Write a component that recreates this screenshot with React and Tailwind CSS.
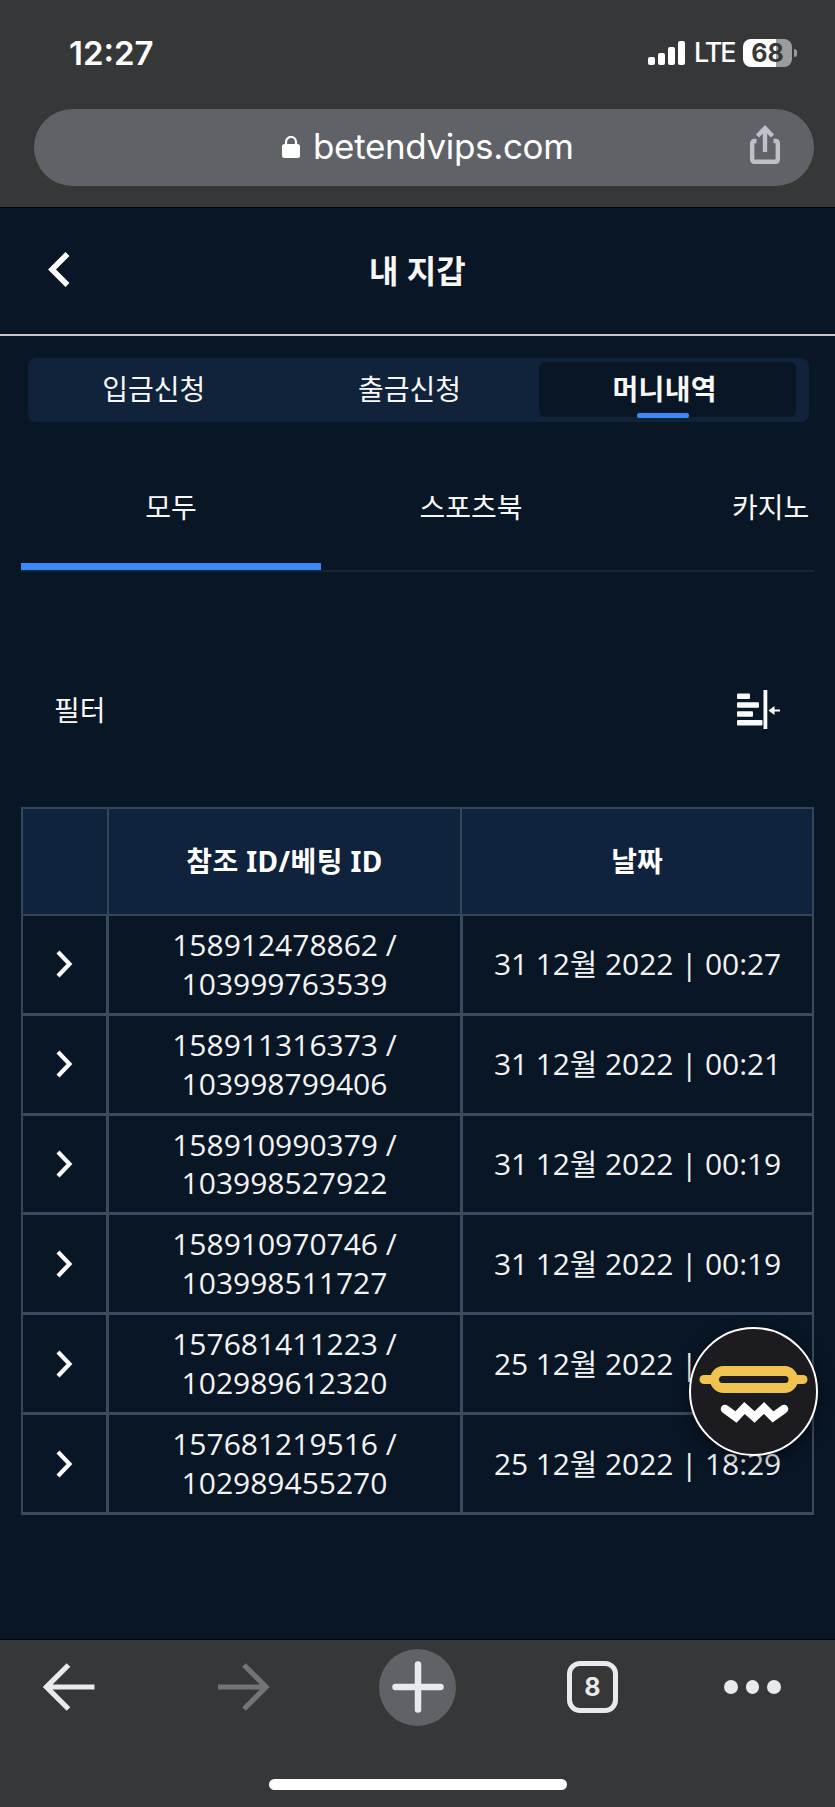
import React from 'react';

const tabs = ['입금신청', '출금신청', '머니내역'];

const rows = [
  { refId: '158912478862', betId: '103999763539', date: '31 12월 2022 | 00:27' },
  { refId: '158911316373', betId: '103998799406', date: '31 12월 2022 | 00:21' },
  { refId: '158910990379', betId: '103998527922', date: '31 12월 2022 | 00:19' },
  { refId: '158910970746', betId: '103998511727', date: '31 12월 2022 | 00:19' },
  { refId: '157681411223', betId: '102989612320', date: '25 12월 2022 | 18:33' },
  { refId: '157681219516', betId: '102989455270', date: '25 12월 2022 | 18:29' },
];

function StatusBar() {
  return (
    <div className="flex h-[109px] items-start justify-between pt-[34px] pr-[38px] pl-[69px] text-white">
      <div className="text-[33px] leading-[38px] font-semibold">12:27</div>
      <div className="flex h-[38px] items-center">
        <svg width="37" height="24" viewBox="0 0 37 24" fill="currentColor">
          <rect x="0" y="16" width="7" height="8" rx="2" />
          <rect x="10" y="12" width="7" height="12" rx="2" />
          <rect x="20" y="6" width="7" height="18" rx="2" />
          <rect x="30" y="0" width="7" height="24" rx="2" />
        </svg>
        <span className="ml-[9px] w-[40px] text-[27px] leading-[38px] font-medium tracking-[-2px] whitespace-nowrap">LTE</span>
        <div className="ml-[9px] flex h-[28px] w-[49px] items-center justify-center rounded-[8px] bg-linear-to-r from-white from-67% to-[#9b9c9d] to-67% text-[25px] leading-none font-bold text-[#363738]">
          68
        </div>
        <div className="ml-[2px] h-[8px] w-[3px] rounded-r-full bg-[#9b9c9d]" />
      </div>
    </div>
  );
}

function AddressBar() {
  return (
    <div className="mr-[21px] ml-[34px] flex h-[77px] items-center rounded-full bg-[#5f6267] pr-[34px] pl-[248px]">
      <svg className="mb-[2px]" width="18" height="22" viewBox="0 0 18 22" fill="none">
        <rect x="0" y="8" width="18" height="14" rx="2.5" fill="#fff" />
        <path d="M4 9V6a5 5 0 0 1 10 0v3" stroke="#fff" strokeWidth="2.2" />
      </svg>
      <span className="mb-[3px] ml-[13px] flex-1 text-[35px] leading-[40px] tracking-[-0.35px] text-white">betendvips.com</span>
      <svg className="mb-[6px]" width="30" height="39" viewBox="0 0 30 39" fill="none" stroke="#bdc0c6" strokeWidth="4.4">
        <path d="M6.5 16H4.4a2.2 2.2 0 0 0-2.2 2.2v16.4a2.2 2.2 0 0 0 2.2 2.2h21.2a2.2 2.2 0 0 0 2.2-2.2V18.2a2.2 2.2 0 0 0-2.2-2.2h-2.1" />
        <path d="M15 27V5M7.5 11 15 3.2 22.5 11" />
      </svg>
    </div>
  );
}

function FilterIcon() {
  return (
    <svg width="44" height="40" viewBox="0 0 44 40" fill="#fafafa">
      <rect x="0" y="3.5" width="13" height="5.5" rx="1" />
      <rect x="0" y="12.3" width="22" height="5.5" rx="1" />
      <rect x="0" y="21.2" width="16" height="5.5" rx="1" />
      <rect x="0" y="30" width="25.5" height="5.5" rx="1" />
      <rect x="26.5" y="0" width="3.8" height="39" />
      <path d="M31.5 20.5 37.5 16v3.6h5.5v1.8h-5.5V25z" />
    </svg>
  );
}

function HistoryTable() {
  return (
    <div className="mr-[21px] ml-[21px] border-t-2 border-l-2 border-[#34465b] text-white">
      <div className="flex h-[107px] bg-[#10233c] font-['Noto_Sans','Noto_Sans_CJK_KR',sans-serif] text-[28px] font-bold">
        <div className="w-[86px] border-r-2 border-b-2 border-[#34465b]" />
        <div className="flex w-[353px] items-center justify-center border-r-2 border-b-2 border-[#34465b] pb-px tracking-[0.4px]">
          참조 ID/베팅 ID
        </div>
        <div className="flex flex-1 items-center justify-center border-r-2 border-b-2 border-[#34465b] pb-px">날짜</div>
      </div>
      {rows.map((row) => (
        <div key={row.refId} className="flex h-[99.83px] text-[30px] text-[#f3f3f3]">
          <div className="flex w-[86px] items-center justify-center border-r-[3px] border-b-[3px] border-[#3b4a5e] pr-px">
            <svg width="17" height="28" viewBox="0 0 17 28" fill="none" stroke="#fafafa" strokeWidth="4.2">
              <path d="m2 2 11.5 12L2 26" />
            </svg>
          </div>
          <div className="w-[354px] border-r-[3px] border-b-[3px] border-[#3b4a5e] pt-[10px] text-center leading-[38.8px]">
            {row.refId} /<br />
            {row.betId}
          </div>
          <div className="flex flex-1 items-center justify-center border-r-2 border-b-[3px] border-[#3b4a5e] pb-px tracking-[-0.1px] whitespace-nowrap">
            {row.date}
          </div>
        </div>
      ))}
    </div>
  );
}

function ChatButton() {
  return (
    <button className="absolute top-[1327px] left-[689px] h-[129px] w-[129px] rounded-full border-2 border-white bg-[#1c1b1f] shadow-[0_4px_16px_rgba(0,0,0,0.45)]">
      <svg width="125" height="125" viewBox="0 0 125 125" fill="none">
        <path d="M13 50.5h99" stroke="#f0c350" strokeWidth="9" strokeLinecap="round" />
        <rect x="19" y="37" width="88" height="27" rx="13.5" fill="#f0c350" />
        <rect x="28" y="47" width="69.5" height="7" rx="3.5" fill="#1c1b1f" />
        <path d="m34 80 11 8 8.5-9 10 9 9.5-9 9 9 11-8" stroke="#fff" strokeWidth="8.5" strokeLinecap="round" />
      </svg>
    </button>
  );
}

function BottomBar() {
  return (
    <div className="h-[168px] border-t border-[#02060c] bg-[#363738]">
      <div className="flex h-[94px] items-center pl-[43px]">
        <svg width="52" height="48" viewBox="0 0 52 48" fill="none" stroke="#e8eaed" strokeWidth="5.2">
          <path d="M51.5 24H4M25.5 2 3.5 24l22 22" />
        </svg>
        <svg className="ml-[123px]" width="52" height="48" viewBox="0 0 52 48" fill="none" stroke="#737476" strokeWidth="5.2">
          <path d="M0 24h48M26 2l22 22-22 22" />
        </svg>
        <div className="ml-[109px] flex h-[77px] w-[77px] items-center justify-center rounded-full bg-[#5f6267]">
          <svg width="52" height="52" viewBox="0 0 52 52" stroke="#e8eaed" strokeWidth="6.5" strokeLinecap="round">
            <path d="M26 3.5v45M3.5 26h45" />
          </svg>
        </div>
        <div className="ml-[111px] flex h-[52px] w-[51px] items-center justify-center rounded-[13px] border-[5.5px] border-[#e8eaed] text-[25px] leading-none font-bold text-[#e8eaed]">
          8
        </div>
        <div className="ml-[106px] flex gap-[8px]">
          <span className="h-[13.5px] w-[13.5px] rounded-full bg-[#e8eaed]" />
          <span className="h-[13.5px] w-[13.5px] rounded-full bg-[#e8eaed]" />
          <span className="h-[13.5px] w-[13.5px] rounded-full bg-[#e8eaed]" />
        </div>
      </div>
      <div className="mt-[45px] ml-[269px] h-[11px] w-[298px] rounded-full bg-white" />
    </div>
  );
}

export default function App() {
  return (
    <div className="relative flex h-[1807px] w-[835px] flex-col overflow-hidden bg-[#091626] font-['Inter','Noto_Sans_CJK_KR',sans-serif]">
      <div className="h-[208px] shrink-0 border-b border-[#02060c] bg-[#363738]">
        <StatusBar />
        <AddressBar />
      </div>

      <main className="flex-1 font-['Open_Sans','Noto_Sans_CJK_KR',sans-serif] text-[#f8f8f8]">
        <header className="flex h-[128px] items-center border-b-2 border-[#c6c7c5] pl-[48px]">
          <svg className="mb-[4px]" width="22" height="35" viewBox="0 0 22 35" fill="none" stroke="#fff" strokeWidth="5.6">
            <path d="M19.5 2 4 17.5 19.5 33" />
          </svg>
          <h1 className="ml-[299px] text-[32px] leading-[48px] font-bold">내 지갑</h1>
        </header>

        <nav className="mt-[22px] mr-[26px] ml-[28px] flex h-[64px] rounded-[8px] bg-[#10233b] pt-[4px] pr-[13px] text-[28px]">
          {tabs.map((tab, i) => (
            <div
              key={tab}
              className={
                i === 2
                  ? 'relative flex h-[55px] w-[257px] items-center justify-center rounded-[6px] bg-[#091626] pr-[6px] pb-[2px] font-bold tracking-[0.3px]'
                  : 'flex h-[55px] w-[256px] items-center justify-center pr-[4px] pb-[2px]'
              }
            >
              {tab}
              {i === 2 && <span className="absolute -bottom-px left-[98px] h-[5px] w-[52px] rounded-[2px] bg-[#3b88f7]" />}
            </div>
          ))}
        </nav>

        <div className="mx-[21px] mt-[48px] flex h-[102px] overflow-hidden border-b-2 border-[#1a2534] text-[28px] leading-[74px]">
          <div className="w-[300px] shrink-0 border-b-[7px] border-[#3b88f7] text-center">모두</div>
          <div className="w-[300px] shrink-0 text-center">스포츠북</div>
          <div className="w-[300px] shrink-0 pl-[111px]">카지노</div>
        </div>

        <div className="mt-[97px] mb-[56px] flex h-[82px] items-center justify-between pr-[54px] pl-[54px]">
          <span className="text-[28px]">필터</span>
          <FilterIcon />
        </div>

        <HistoryTable />
      </main>

      <BottomBar />
      <ChatButton />
    </div>
  );
}
